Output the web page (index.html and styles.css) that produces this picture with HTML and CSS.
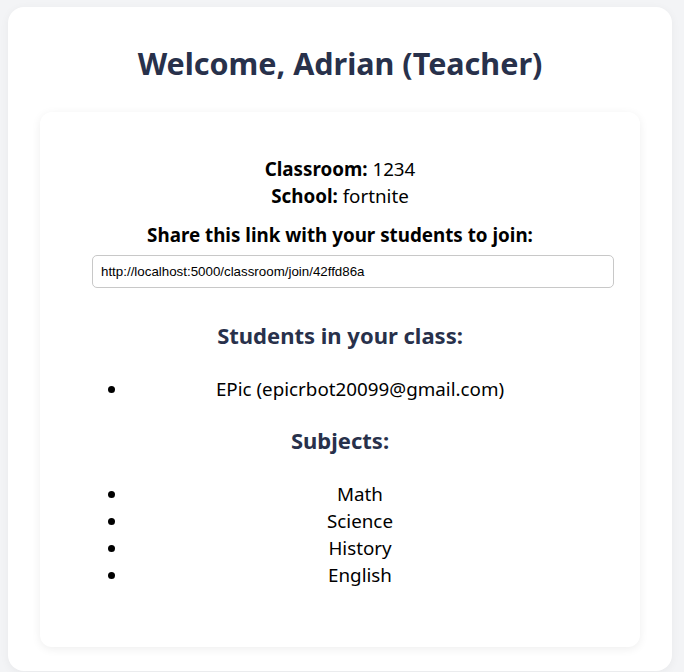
FILE: index.html
```html
<!DOCTYPE html>
<html lang="en">
<head>
<meta charset="utf-8">
<title>Teacher Dashboard</title>
<link rel="stylesheet" href="styles.css">
</head>
<body>
<div class="page">
  <h1 class="title">Welcome, Adrian (Teacher)</h1>
  <div class="panel">
    <div class="info">
      <p class="info-line"><strong>Classroom:</strong> 1234</p>
      <p class="info-line"><strong>School:</strong> fortnite</p>
    </div>
    <p class="share-label">Share this link with your students to join:</p>
    <input class="share-input" type="text" value="http://localhost:5000/classroom/join/42ffd86a" readonly>
    <h3 class="section-title">Students in your class:</h3>
    <ul class="list">
      <li>EPic (epicrbot20099@gmail.com)</li>
    </ul>
    <h3 class="section-title">Subjects:</h3>
    <ul class="list">
      <li>Math</li>
      <li>Science</li>
      <li>History</li>
      <li>English</li>
    </ul>
  </div>
</div>
</body>
</html>
```

FILE: styles.css
```css
html, body {
  margin: 0;
  padding: 0;
}
body {
  background: #f3f4f6;
  font-family: "Noto Sans", "Open Sans", sans-serif;
  color: #000;
  padding: 7px 12px 0 8px;
  height: 672px;
  box-sizing: border-box;
  overflow: hidden;
}
.page {
  background: #fff;
  border-radius: 16px;
  box-shadow: 0 2px 10px rgba(0, 0, 0, 0.05);
  padding: 37px 32px 24px 32px;
  height: 664px;
  box-sizing: border-box;
}
.title {
  margin: 0;
  text-align: center;
  font-size: 30.5px;
  line-height: 38px;
  font-weight: 700;
  color: #28314b;
}
.panel {
  margin-top: 30px;
  background: #fff;
  border-radius: 12px;
  box-shadow: 0 2px 10px rgba(0, 0, 0, 0.07);
  padding: 44px 48px 58px 48px;
  text-align: center;
  height: 535px;
  box-sizing: border-box;
}
.info-line {
  margin: 0;
  font-size: 18.8px;
  line-height: 27px;
}
.info-line strong {
  font-weight: 700;
}
.share-label {
  margin: 12px 0 0 0;
  font-size: 18.8px;
  line-height: 27px;
  font-weight: 700;
}
.share-input {
  display: block;
  margin: 6px 0 0 4px;
  width: 522px;
  box-sizing: border-box;
  padding: 8px;
  font-family: "Liberation Sans", Arial, sans-serif;
  font-size: 13.333px;
  line-height: 15px;
  border: 1px solid #c8c8c8;
  border-radius: 5px;
  color: #000;
  background: #fff;
  outline: none;
}
.section-title {
  margin: 33px 0 0 0;
  font-size: 22px;
  line-height: 29px;
  font-weight: 700;
  color: #28314b;
}
.list {
  margin: 26px 0 0 0;
  padding: 0 0 0 40px;
  list-style: disc;
}
.list li {
  font-size: 18.8px;
  line-height: 27px;
  text-align: center;
}
.list + .section-title {
  margin-top: 23px;
}
```
